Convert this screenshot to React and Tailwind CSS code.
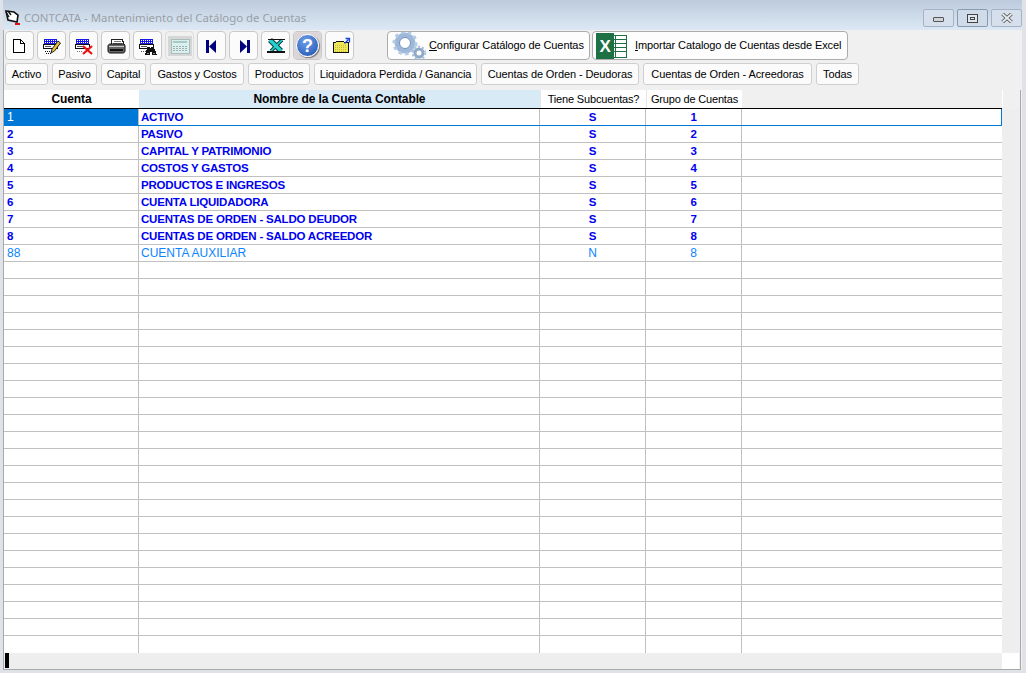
const cuentas = [
  { cuenta: '1', nombre: 'ACTIVO', sub: 'S', grupo: '1' },
  { cuenta: '2', nombre: 'PASIVO', sub: 'S', grupo: '2' },
  { cuenta: '3', nombre: 'CAPITAL Y PATRIMONIO', sub: 'S', grupo: '3' },
  { cuenta: '4', nombre: 'COSTOS Y GASTOS', sub: 'S', grupo: '4' },
  { cuenta: '5', nombre: 'PRODUCTOS E INGRESOS', sub: 'S', grupo: '5' },
  { cuenta: '6', nombre: 'CUENTA LIQUIDADORA', sub: 'S', grupo: '6' },
  { cuenta: '7', nombre: 'CUENTAS DE ORDEN - SALDO DEUDOR', sub: 'S', grupo: '7' },
  { cuenta: '8', nombre: 'CUENTAS DE ORDEN - SALDO ACREEDOR', sub: 'S', grupo: '8' },
  { cuenta: '88', nombre: 'CUENTA AUXILIAR', sub: 'N', grupo: '8', aux: true },
];

const filas = Array.from({ length: 32 }, function (_, i) { return cuentas[i] || {}; });

const filtros = [
  { label: 'Activo', w: 'w-[43px]' },
  { label: 'Pasivo', w: 'w-[45px]' },
  { label: 'Capital', w: 'w-[45px]' },
  { label: 'Gastos y Costos', w: 'w-[94px]' },
  { label: 'Productos', w: 'w-[62px]' },
  { label: 'Liquidadora Perdida / Ganancia', w: 'w-[163px]' },
  { label: 'Cuentas de Orden - Deudoras', w: 'w-[158px]' },
  { label: 'Cuentas de Orden - Acreedoras', w: 'w-[169px]' },
  { label: 'Todas', w: 'w-[43px]' },
];

const Ico = ({ children }) => (
  <svg width="22" height="22" viewBox="0 0 22 22" shapeRendering="crispEdges">{children}</svg>
);

// the little blue "record" grid used by edit / delete / search
const Ficha = () => (
  <g>
    <rect x="3" y="4" width="13" height="5" fill="#1a1ae6" />
    <path d="M4 5.5h11M4 7.5h11" stroke="#fff" strokeDasharray="1 1" />
    <rect x="2.5" y="9.5" width="14" height="4" fill="#fff" stroke="#111" />
    <path d="M4 11.5h6" stroke="#555" />
  </g>
);

const IconNuevo = () => (
  <Ico>
    <path d="M4.5 4.5h7l4 4v9h-11z" fill="#fff" stroke="#000" />
    <path d="M11.5 4.5v4h4" fill="none" stroke="#000" />
  </Ico>
);

const IconEditar = () => (
  <Ico>
    <Ficha />
    <path d="M4 16h7M5 18h6" stroke="#111" strokeDasharray="1 1" />
    <path d="M11 14l6-8 2.5 2-6 8-3.5 2z" fill="#e8c23c" stroke="#222" shapeRendering="auto" />
  </Ico>
);

const IconBorrar = () => (
  <Ico>
    <Ficha />
    <path d="M4 16h6" stroke="#777" strokeDasharray="1 1" />
    <path d="M10 11l9 8M19 11l-9 8" stroke="#ee1111" strokeWidth="2.2" shapeRendering="auto" />
  </Ico>
);

const IconImprimir = () => (
  <Ico>
    <path d="M7 4h10l2 5H6z" fill="#fff" stroke="#222" />
    <path d="M9 6h7M8 8h9" stroke="#777" />
    <path d="M3 11c0-1 1-2 2-2h13c1 0 2 1 2 2v5c0 1-1 2-2 2H5c-1 0-2-1-2-2z" fill="#666" stroke="#111" shapeRendering="auto" />
    <path d="M4 11h15" stroke="#ccc" />
    <path d="M5 15h13" stroke="#111" strokeWidth="2" />
  </Ico>
);

const IconBuscar = () => (
  <Ico>
    <Ficha />
    <path d="M4 16h5" stroke="#555" strokeDasharray="1 1" />
    <path d="M10 12h3v2h1v-2h3v2h1l2 6h-5v-3h-2v3h-5l2-6z" fill="#111" />
    <path d="M10 18h2M16 18h2" stroke="#888" />
  </Ico>
);

const IconCalc = () => (
  <svg width="24" height="22" viewBox="0 0 24 22" shapeRendering="crispEdges">
    <rect x="0" y="1" width="24" height="20" fill="#d6d6d6" />
    <rect x="3" y="4" width="18" height="14" fill="#d9f0ee" stroke="#a9bcbc" />
    <rect x="5" y="6" width="14" height="2" fill="#a9c9c9" />
    <path d="M5 11h14M5 13h14M5 15h14" stroke="#9fb0b0" strokeDasharray="2 1" />
  </svg>
);

const IconPrimero = () => (
  <Ico>
    <rect x="5" y="5" width="3" height="13" fill="#00007f" />
    <path d="M15 5v13L8 11.5z" fill="#00007f" shapeRendering="auto" />
  </Ico>
);

const IconUltimo = () => (
  <Ico>
    <path d="M7 5v13l7-6.5z" fill="#00007f" shapeRendering="auto" />
    <rect x="14" y="5" width="3" height="13" fill="#00007f" />
  </Ico>
);

const IconExcelViejo = () => (
  <Ico>
    <path d="M5 5l11 11" stroke="#063a3a" strokeWidth="5.5" shapeRendering="auto" />
    <path d="M17 5L6 16" stroke="#063a3a" strokeWidth="3.5" shapeRendering="auto" />
    <path d="M5 5l11 11" stroke="#22d0d0" strokeWidth="3.5" shapeRendering="auto" />
    <path d="M17 5L6 16" stroke="#22d0d0" strokeWidth="1.6" shapeRendering="auto" />
    <path d="M3 4h17" stroke="#111" />
    <path d="M2 17h18" stroke="#111" strokeWidth="2" />
  </Ico>
);

const IconAyuda = () => (
  <div className="flex h-[27px] w-[27px] items-center justify-center rounded-[2px] bg-[#dcd6d8]">
    <div className="flex h-[23px] w-[23px] items-center justify-center rounded-full border border-white bg-[radial-gradient(circle_at_40%_30%,#6f9fe8,#1a4fb0)] font-['Liberation_Sans',sans-serif] text-[18px] font-bold leading-none text-white shadow-[1px_1px_1px_#777]">
      ?
    </div>
  </div>
);

const IconCarpeta = () => (
  <Ico>
    <path d="M4.5 7.5h2l1-1h7l1 1h3.500v10h-14.500z" fill="#efe85a" stroke="#111" />
    <path d="M6 10h11M6 12h11M6 14h11M6 16h11" stroke="#c8be3c" strokeDasharray="1 1" />
    <path d="M15.500 8.500L19.500 4.500M16.500 3.500h4v4" fill="none" stroke="#1546d8" strokeWidth="1.3" shapeRendering="auto" />
  </Ico>
);

const IconEngranes = () => (
  <svg width="36" height="28" viewBox="0 0 36 28">
    <circle cx="14" cy="11" r="8" fill="none" stroke="#9db8d8" strokeWidth="5" />
    <circle cx="14" cy="11" r="11" fill="none" stroke="#b4cbe4" strokeWidth="3" strokeDasharray="3.4 3.4" />
    <circle cx="14" cy="11" r="5.5" fill="#fff" stroke="#6f8fb5" />
    <circle cx="28" cy="21" r="4" fill="none" stroke="#8fa9c8" strokeWidth="3" />
    <circle cx="28" cy="21" r="6.3" fill="none" stroke="#a9c0d9" strokeWidth="2" strokeDasharray="2 2" />
  </svg>
);

const IconExcel = () => (
  <svg width="31" height="27" viewBox="0 0 31 27" shapeRendering="crispEdges">
    <rect x="15" y="3" width="15" height="22" fill="#fff" stroke="#1e7145" />
    <path d="M19 3v22M15 7h15M15 11h15M15 15h15M15 19h15" stroke="#1e7145" />
    <rect x="0" y="1" width="18" height="26" fill="#1e7145" />
    <text x="9" y="20" textAnchor="middle" fill="#fff" fontSize="17" fontWeight="700" fontFamily="Liberation Sans, sans-serif">X</text>
  </svg>
);

const BotonIcono = ({ children, disabled }) => (
  <button className={`flex h-[29px] w-[29px] items-center justify-center rounded-[4px] border ${disabled ? 'border-[#dedede] bg-[#f0f0f0]' : 'border-[#c9c9c9] bg-[#fbfbfb]'}`}>
    {children}
  </button>
);

const BotonGrande = ({ icon, w, hot, resto, gap }) => (
  <button className={`flex h-[29px] ${w} items-center whitespace-nowrap rounded-[4px] border border-[#acacac] bg-[#fdfdfd] pl-[3px] text-[11px] tracking-[-0.1px] text-black`}>
    {icon}
    <span className={gap}><span className="underline">{hot}</span>{resto}</span>
  </button>
);

const Celda = ({ className, children }) => (
  <div className={`h-full overflow-hidden whitespace-nowrap ${className}`}>{children}</div>
);

const Fila = ({ fila, index }) => {
  const seleccion = index === 0;
  const color = fila.aux ? 'text-[#0a84ff] font-normal text-[12px]' : 'text-[#0000f0] font-bold text-[11.5px] tracking-[-0.2px]';
  const linea = seleccion ? 'border-[#0078d7]' : 'border-[#c0c0c0]';
  const ultima = index === 31;
  return (
    <div className={`grid h-[17px] grid-cols-[135px_401px_106px_96px_260px] bg-white leading-[16px] ${ultima ? '' : 'border-b'} ${linea} ${seleccion ? 'border-r' : ''}`}>
      <Celda className={`border-r border-[#c0c0c0] pl-[3px] ${seleccion ? 'bg-[#0078d7] text-[12px] font-normal text-white' : color}`}>{fila.cuenta}</Celda>
      <Celda className={`border-r border-[#c0c0c0] pl-[2px] ${color}`}>{fila.nombre}</Celda>
      <Celda className={`border-r border-[#c0c0c0] text-center ${color}`}>{fila.sub}</Celda>
      <Celda className={`border-r border-[#c0c0c0] text-center ${color}`}>{fila.grupo}</Celda>
      <Celda className="" />
    </div>
  );
};

export default function App() {
  return (
    <div className="flex h-screen w-full flex-col overflow-hidden border-r-[4px] border-b-[3px] border-l-[3px] border-[#dfe3e8] bg-[#f0f0f0] shadow-[inset_1px_0_0_#a9a9a9] font-['Liberation_Sans',Arial,sans-serif]">
      {/* Barra de titulo */}
      <div className="-mx-[3px] -mr-[4px] flex h-[30px] shrink-0 items-start justify-between bg-gradient-to-b from-[#bccbdd] to-[#dce8f4] pl-[4px] pr-[4px]">
        <div className="mt-[9px] flex items-center gap-[3px]">
          <svg width="17" height="17" viewBox="0 0 17 17">
            <path d="M2 2l8 1 4 3-1 7-9-2z" fill="#fff" stroke="#111" strokeWidth="1.6" />
            <path d="M2 3l3 5M4 2l3 4" stroke="#111" strokeWidth="1.4" />
            <path d="M11 15h5" stroke="#e01010" strokeWidth="2" />
          </svg>
          <span className="font-['Noto_Sans',sans-serif] text-[11.4px] text-[#999fa6]">CONTCATA - Mantenimiento del Catálogo de Cuentas</span>
        </div>
        <div className="mt-[9px] flex gap-[3px]">
          <div className="flex h-[18px] w-[31px] items-center justify-center rounded-[2px] border border-[#a5b3c4] bg-[#d5e0ec]">
            <div className="mt-[3px] h-[5px] w-[11px] rounded-[1px] border border-[#555] bg-[#cfd4da]" />
          </div>
          <div className="flex h-[18px] w-[31px] items-center justify-center rounded-[2px] border border-[#8a9bb0] bg-[#cfdbe8]">
            <div className="flex h-[9px] w-[11px] items-center justify-center border border-[#444] bg-[#dfe6ee]">
              <div className="h-[3px] w-[5px] border border-[#444]" />
            </div>
          </div>
          <div className="flex h-[18px] w-[31px] items-center justify-center rounded-[2px] border border-[#a5b3c4] bg-[#d5e0ec]">
            <svg width="12" height="10" viewBox="0 0 12 10">
              <path d="M1.5 1L10.5 9M10.5 1L1.5 9" stroke="#555" strokeWidth="3.6" />
              <path d="M1.5 1L10.5 9M10.5 1L1.5 9" stroke="#e8ecf0" strokeWidth="1.8" />
            </svg>
          </div>
        </div>
      </div>

      {/* Barra de herramientas */}
      <div className="mt-[1px] flex h-[29px] shrink-0 pl-[2px]">
        <div className="flex gap-[3px]">
          <BotonIcono><IconNuevo /></BotonIcono>
          <BotonIcono><IconEditar /></BotonIcono>
          <BotonIcono><IconBorrar /></BotonIcono>
          <BotonIcono><IconImprimir /></BotonIcono>
          <BotonIcono><IconBuscar /></BotonIcono>
          <BotonIcono disabled><IconCalc /></BotonIcono>
          <BotonIcono><IconPrimero /></BotonIcono>
          <BotonIcono><IconUltimo /></BotonIcono>
          <BotonIcono><IconExcelViejo /></BotonIcono>
          <BotonIcono><IconAyuda /></BotonIcono>
          <BotonIcono><IconCarpeta /></BotonIcono>
        </div>
        <div className="ml-[33px] flex gap-[2px]">
          <BotonGrande icon={<IconEngranes />} w="w-[203px]" hot="C" resto="onfigurar Catálogo de Cuentas" gap="ml-[2px]" />
          <BotonGrande icon={<IconExcel />} w="w-[256px]" hot="I" resto="mportar Catalogo de Cuentas desde Excel" gap="ml-[8px]" />
        </div>
      </div>

      {/* Filtros */}
      <div className="mt-[3px] flex h-[22px] shrink-0 gap-[4px] pl-[2px]">
        {filtros.map(function (f) {
          return (
            <button key={f.label} className={`h-[22px] ${f.w} whitespace-nowrap rounded-[3px] border border-[#cfcfcf] bg-[#fbfbfb] text-center text-[11px] leading-[18px] tracking-[-0.1px] text-black`}>
              {f.label}
            </button>
          );
        })}
      </div>

      {/* Grid */}
      <div className="mt-[5px] ml-[1px] w-[1017px] shrink-0 border-r border-b border-[#a9a9a9]">
        <div className="grid h-[18px] w-[999px] grid-cols-[135px_401px_106px_96px_261px] text-center text-[12px] leading-[18px] text-black">
          <div className="bg-white font-bold tracking-[-0.1px]">Cuenta</div>
          <div className="bg-[#d9eaf7] font-bold tracking-[-0.1px]">Nombre de la Cuenta Contable</div>
          <div className="border-l border-[#e6e6e6] bg-white text-[11px] tracking-[-0.16px]">Tiene Subcuentas?</div>
          <div className="border-l border-[#e6e6e6] bg-white text-[11px] tracking-[-0.18px]">Grupo de Cuentas</div>
          <div className="border-r border-white" />
        </div>
        <div className="h-[1px] w-[998px] bg-black" />
        <div className="flex">
          <div className="w-[998px]">
            {filas.map(function (fila, i) {
              return <Fila key={i} fila={fila} index={i} />;
            })}
          </div>
          <div className="w-[18px] bg-[#eeeeee]" />
        </div>
        {/* Barra inferior */}
        <div className="flex h-[16px]">
          <div className="flex w-[998px] items-start bg-[#eeeeee] pl-[1px]">
            <div className="h-[15px] w-[4px] bg-black" />
          </div>
          <div className="w-[17px] bg-white" />
        </div>
      </div>
    </div>
  );
}
